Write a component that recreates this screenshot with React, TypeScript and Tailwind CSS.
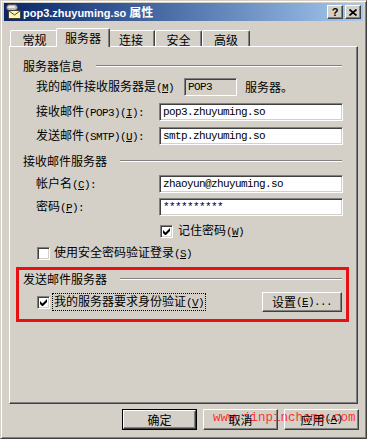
import React from "react";

const Mono = ({ children }: { children: React.ReactNode }) => (
  <span className="font-['Liberation_Mono',monospace] text-[11px] tracking-[-0.6px]">
    {children}
  </span>
);

const GroupHeader = ({ title, className }: { title: string; className: string }) => (
  <div className={`flex items-center h-[16px] ${className}`}>
    <span>{title}</span>
    <div className="flex-1 ml-[13px] border-t border-t-[#808080] border-b border-b-white" />
  </div>
);

const TextBox = ({ value, gray }: { value: string; gray?: boolean }) => (
  <div
    className={`h-[18px] flex items-center pl-[3px] border border-t-[#808080] border-l-[#808080] border-r-white border-b-white shadow-[inset_1px_1px_0_#404040,inset_-1px_-1px_0_#d4d0c8] ${
      gray ? "w-[53px] bg-[#d4d0c8]" : "w-[184px] bg-white"
    }`}
  >
    <Mono>{value}</Mono>
  </div>
);

const CheckBox = ({ checked }: { checked?: boolean }) => (
  <div className="w-[13px] h-[13px] shrink-0 bg-white border border-t-[#808080] border-l-[#808080] border-r-white border-b-white shadow-[inset_1px_1px_0_#404040,inset_-1px_-1px_0_#d4d0c8] flex items-center justify-center">
    {checked && (
      <svg width="7" height="7" viewBox="0 0 7 7">
        <path d="M0 2v3l2 2h1l4-4V0L2.5 4.5z" fill="#000" />
      </svg>
    )}
  </div>
);

const Button = ({ children, def }: { children: React.ReactNode; def?: boolean }) => (
  <div className={`w-[75px] h-[21px] ${def ? "border border-black" : ""}`}>
    <div className="w-full h-full flex items-center justify-center border border-t-white border-l-white border-r-[#404040] border-b-[#404040] shadow-[inset_-1px_-1px_0_#808080]">
      {children}
    </div>
  </div>
);

export default function App() {
  return (
    <div className="relative w-[367px] h-[439px] overflow-hidden bg-[#d4d0c8] border border-t-[#d4d0c8] border-l-[#d4d0c8] border-r-[#404040] border-b-[#404040] shadow-[inset_1px_1px_0_#ffffff,inset_-1px_-1px_0_#808080] p-[2px] flex flex-col font-['Noto_Sans_CJK_SC',sans-serif] text-[12px] leading-none text-black">
      {/* title bar */}
      <div className="mx-[1px] h-[18px] flex items-center pl-[1px] pr-[2px] bg-linear-to-r from-[#0a246a] to-[#a6caf0]">
        <svg width="16" height="16" viewBox="0 0 16 16" className="shrink-0">
          <rect x="1.5" y="0.5" width="11" height="6" rx="3" fill="#b8b8b8" stroke="#505050" />
          <rect x="3" y="2" width="7" height="2" rx="1" fill="#e8e8e8" />
          <rect x="3.5" y="6.5" width="12" height="8" fill="#fff4b0" stroke="#404040" />
          <path d="M3.5 6.5l6 4.5 6-4.5" fill="none" stroke="#404040" />
        </svg>
        <span className="ml-[2px] text-white font-bold flex items-baseline">
          <span className="font-['Liberation_Sans',sans-serif] text-[11px]">pop3.zhuyuming.so</span>
          <span className="ml-[3px] text-[12px]">属性</span>
        </span>
        <div className="ml-auto flex gap-[2px]">
          <div className="w-[16px] h-[14px] flex items-center justify-center bg-[#d4d0c8] border border-t-white border-l-white border-r-[#404040] border-b-[#404040] shadow-[inset_-1px_-1px_0_#808080]">
            <span className="font-['Liberation_Sans',sans-serif] font-bold text-[11px]">?</span>
          </div>
          <div className="w-[16px] h-[14px] flex items-center justify-center bg-[#d4d0c8] border border-t-white border-l-white border-r-[#404040] border-b-[#404040] shadow-[inset_-1px_-1px_0_#808080]">
            <svg width="8" height="7" viewBox="0 0 8 7">
              <path d="M0.5 0.5l7 6M7.5 0.5l-7 6" stroke="#000" strokeWidth="1.7" />
            </svg>
          </div>
        </div>
      </div>

      {/* tabs */}
      <div className="mt-[7px] ml-[7px] h-[18px] flex items-end">
        <div className="w-[48px] h-[16px] flex items-center justify-center pt-[2px] rounded-tl-[2px] border-t border-l border-t-white border-l-white">
          常规
        </div>
        <div className="relative z-10 -mx-[2px] -mb-[1px] w-[54px] h-[19px] flex items-center justify-center bg-[#d4d0c8] rounded-t-[2px] border-t border-l border-r border-t-white border-l-white border-r-[#404040] shadow-[inset_-1px_0_0_#808080]">
          服务器
        </div>
        <div className="w-[47px] h-[16px] flex items-center justify-center pt-[2px] border-t border-t-white border-r border-r-[#404040] shadow-[inset_-1px_0_0_#808080]">
          连接
        </div>
        <div className="w-[47px] h-[16px] flex items-center justify-center pt-[2px] rounded-t-[2px] border-t border-l border-r border-t-white border-l-white border-r-[#404040] shadow-[inset_-1px_0_0_#808080]">
          安全
        </div>
        <div className="w-[48px] h-[16px] flex items-center justify-center pt-[2px] rounded-t-[2px] border-t border-l border-r border-t-white border-l-white border-r-[#404040] shadow-[inset_-1px_0_0_#808080]">
          高级
        </div>
      </div>

      {/* panel */}
      <div className="ml-[6px] w-[349px] h-[358px] flex flex-col border border-t-white border-l-white border-r-[#404040] border-b-[#404040] shadow-[inset_-1px_-1px_0_#808080]">
        <GroupHeader title="服务器信息" className="mt-[11px] pl-[13px] mr-[15px]" />

        <div className="mt-[4px] h-[18px] pl-[26px] flex items-center">
          <div className="w-[148px]">
            我的邮件接收服务器是<Mono>(<u>M</u>)</Mono>
          </div>
          <TextBox value="POP3" gray />
          <span className="ml-[8px]">服务器。</span>
        </div>

        <div className="mt-[7px] h-[18px] pl-[26px] flex items-center">
          <div className="w-[123px]">
            接收邮件<Mono>(POP3)(<u>I</u>):</Mono>
          </div>
          <TextBox value="pop3.zhuyuming.so" />
        </div>

        <div className="mt-[6px] h-[18px] pl-[26px] flex items-center">
          <div className="w-[123px]">
            发送邮件<Mono>(SMTP)(<u>U</u>):</Mono>
          </div>
          <TextBox value="smtp.zhuyuming.so" />
        </div>

        <GroupHeader title="接收邮件服务器" className="mt-[8px] pl-[13px] mr-[15px]" />

        <div className="mt-[6px] h-[18px] pl-[26px] flex items-center">
          <div className="w-[123px]">
            帐户名<Mono>(<u>C</u>):</Mono>
          </div>
          <TextBox value="zhaoyun@zhuyuming.so" />
        </div>

        <div className="mt-[5px] h-[18px] pl-[26px] flex items-center">
          <div className="w-[123px]">
            密码<Mono>(<u>P</u>):</Mono>
          </div>
          <TextBox value="**********" />
        </div>

        <div className="mt-[8px] h-[14px] pl-[150px] flex items-center gap-[5px]">
          <CheckBox checked />
          <span>
            记住密码<Mono>(<u>W</u>)</Mono>
          </span>
        </div>

        <div className="mt-[8px] h-[14px] pl-[27px] flex items-center gap-[4px]">
          <CheckBox />
          <span>
            使用安全密码验证登录<Mono>(<u>S</u>)</Mono>
          </span>
        </div>

        <div className="mt-[7px] ml-[6px] w-[333px] h-[55px] border-[3px] border-[#e81010] flex flex-col">
          <GroupHeader title="发送邮件服务器" className="mt-[1px] pl-[4px] mr-[4px]" />
          <div className="mt-[5px] h-[20px] pl-[18px] pr-[4px] flex items-center">
            <CheckBox checked />
            <span className="ml-[2px] px-[1px] py-[1px] border border-dotted border-black">
              我的服务器要求身份验证<Mono>(<u>V</u>)</Mono>
            </span>
            <div className="ml-auto w-[80px] h-[20px] flex items-center justify-center border border-t-white border-l-white border-r-[#404040] border-b-[#404040] shadow-[inset_-1px_-1px_0_#808080]">
              设置<Mono>(<u>E</u>)...</Mono>
            </div>
          </div>
        </div>
      </div>

      {/* watermark, under the button labels */}
      <div className="absolute left-[212px] top-[411px] font-['Liberation_Mono',monospace] text-[12.5px] text-[#ff2020]/90 pointer-events-none">
        www.jinpinchome.com
      </div>

      {/* bottom buttons */}
      <div className="relative z-10 mt-[5px] pr-[5px] flex justify-end gap-[6px]">
        <Button def>确定</Button>
        <Button>取消</Button>
        <Button>
          应用<Mono>(<u>A</u>)</Mono>
        </Button>
      </div>
    </div>
  );
}
